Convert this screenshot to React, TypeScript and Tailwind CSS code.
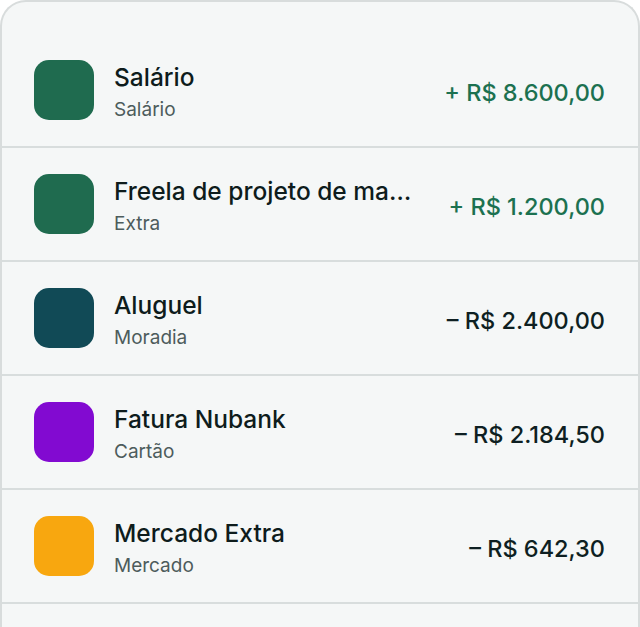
type Tx = {
  id: number
  name: string
  category: string
  amount: string
  income: boolean
  color: string
}

const transactions: Tx[] = [
  { id: 1, name: 'Salário', category: 'Salário', amount: '+ R$ 8.600,00', income: true, color: 'bg-[#1f6b4f]' },
  { id: 2, name: 'Freela de projeto de marketing digital', category: 'Extra', amount: '+ R$ 1.200,00', income: true, color: 'bg-[#1f6b4f]' },
  { id: 3, name: 'Aluguel', category: 'Moradia', amount: '– R$ 2.400,00', income: false, color: 'bg-[#114a56]' },
  { id: 4, name: 'Fatura Nubank', category: 'Cartão', amount: '– R$ 2.184,50', income: false, color: 'bg-[#820ad1]' },
  { id: 5, name: 'Mercado Extra', category: 'Mercado', amount: '– R$ 642,30', income: false, color: 'bg-[#f8a70f]' },
  { id: 6, name: 'Farmácia', category: 'Saúde', amount: '– R$ 89,90', income: false, color: 'bg-[#1f6b4f]' },
]

const TxRow = ({ tx }: { tx: Tx }) => {
  return (
    <div className="flex h-[114px] shrink-0 items-center gap-5 border-b-2 border-[#d8dddd] pl-8 pr-[33px]">
      <div className={`h-[60px] w-[60px] shrink-0 rounded-[15px] ${tx.color}`}></div>
      <div className="flex min-w-0 flex-1 flex-col pt-1">
        <span className="truncate text-[24.5px] leading-[30px] font-medium text-[#0e1c1c]">{tx.name}</span>
        <span className="mt-[5px] text-[19px] leading-[26px] text-[#4d5c5c]">{tx.category}</span>
      </div>
      <span
        className={`mt-[6px] ml-2 shrink-0 text-[23.5px] font-medium whitespace-nowrap ${
          tx.income ? 'text-[#1c7150]' : 'text-[#0e1f22]'
        }`}
      >
        {tx.amount}
      </span>
    </div>
  )
}

export default function App() {
  return (
    <div className="h-[627px] w-[640px] overflow-hidden bg-white" style={{ fontFamily: 'Inter, "Noto Sans", sans-serif' }}>
      <div className="flex flex-col rounded-t-[26px] border-2 border-b-0 border-[#d8dcdc] bg-[#f5f7f7] pt-8">
        {transactions.map((tx) => (
          <TxRow key={tx.id} tx={tx} />
        ))}
      </div>
    </div>
  )
}
